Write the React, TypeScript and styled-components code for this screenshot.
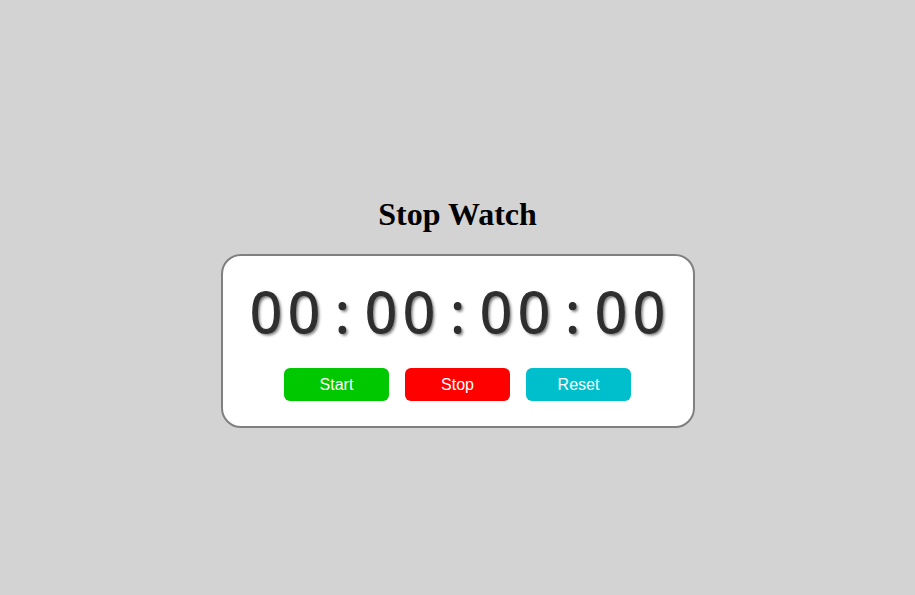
import React, { useEffect, useRef, useState } from "react";
import styled, { createGlobalStyle } from "styled-components";

const GlobalStyle = createGlobalStyle`
  html, body {
    margin: 0;
    padding: 0;
    background-color: #d3d3d3;
  }
`;

const Page = styled.div`
  min-height: 100vh;
  box-sizing: border-box;
  padding-top: 196px;
  display: flex;
  flex-direction: column;
  align-items: center;
  background-color: #d3d3d3;
`;

const Title = styled.h1`
  margin: 0 0 21px;
  font-family: "Liberation Serif", "Times New Roman", serif;
  font-size: 32px;
  line-height: 37px;
  font-weight: bold;
  color: #000;
`;

const Card = styled.div`
  width: 474px;
  box-sizing: border-box;
  padding: 27px 0 25px;
  background-color: #fff;
  border: 2px solid #808080;
  border-radius: 20px;
  display: flex;
  flex-direction: column;
  align-items: center;
  gap: 29px;
`;

const Time = styled.div`
  display: flex;
  align-items: baseline;
  font-family: "Open Sans", "DejaVu Sans", sans-serif;
  font-size: 56px;
  font-weight: 400;
  line-height: 56px;
  color: #2e2e2e;
  -webkit-text-stroke: 1.2px #2e2e2e;
  text-shadow: 2px 2px 3px rgba(0, 0, 0, 0.55);
`;

const Digits = styled.span`
  letter-spacing: 6px;
  margin-right: -6px;
`;

const Sep = styled.span`
  width: 45px;
  text-align: center;
`;

const Actions = styled.div`
  display: flex;
  gap: 16px;
`;

const Button = styled.button<{ $color: string }>`
  width: 105px;
  height: 33px;
  border: none;
  border-radius: 6px;
  background-color: ${(p) => p.$color};
  color: #fff;
  font-family: "Liberation Sans", Arial, sans-serif;
  font-size: 16px;
  cursor: pointer;
  padding: 0;
`;

const pad = (n: number) => String(n).padStart(2, "0");

const App = () => {
  const [ms, setMs] = useState(0);
  const [running, setRunning] = useState(false);
  const timer = useRef<number | null>(null);

  useEffect(() => {
    if (!running) return;
    timer.current = window.setInterval(() => setMs((m) => m + 10), 10);
    return () => {
      if (timer.current) window.clearInterval(timer.current);
    };
  }, [running]);

  const hours = Math.floor(ms / 3600000);
  const minutes = Math.floor(ms / 60000) % 60;
  const seconds = Math.floor(ms / 1000) % 60;
  const centis = Math.floor(ms / 10) % 100;

  const parts = [hours, minutes, seconds, centis].map(pad);

  return (
    <>
      <GlobalStyle />
      <Page>
        <Title>Stop Watch</Title>
        <Card>
          <Time>
            {parts.map((p, i) => (
              <React.Fragment key={i}>
                {i > 0 && <Sep>:</Sep>}
                <Digits>{p}</Digits>
              </React.Fragment>
            ))}
          </Time>
          <Actions>
            <Button $color="#00c800" onClick={() => setRunning(true)}>
              Start
            </Button>
            <Button $color="#ff0000" onClick={() => setRunning(false)}>
              Stop
            </Button>
            <Button
              $color="#00bfcc"
              onClick={() => {
                setRunning(false);
                setMs(0);
              }}
            >
              Reset
            </Button>
          </Actions>
        </Card>
      </Page>
    </>
  );
};

export default App;
